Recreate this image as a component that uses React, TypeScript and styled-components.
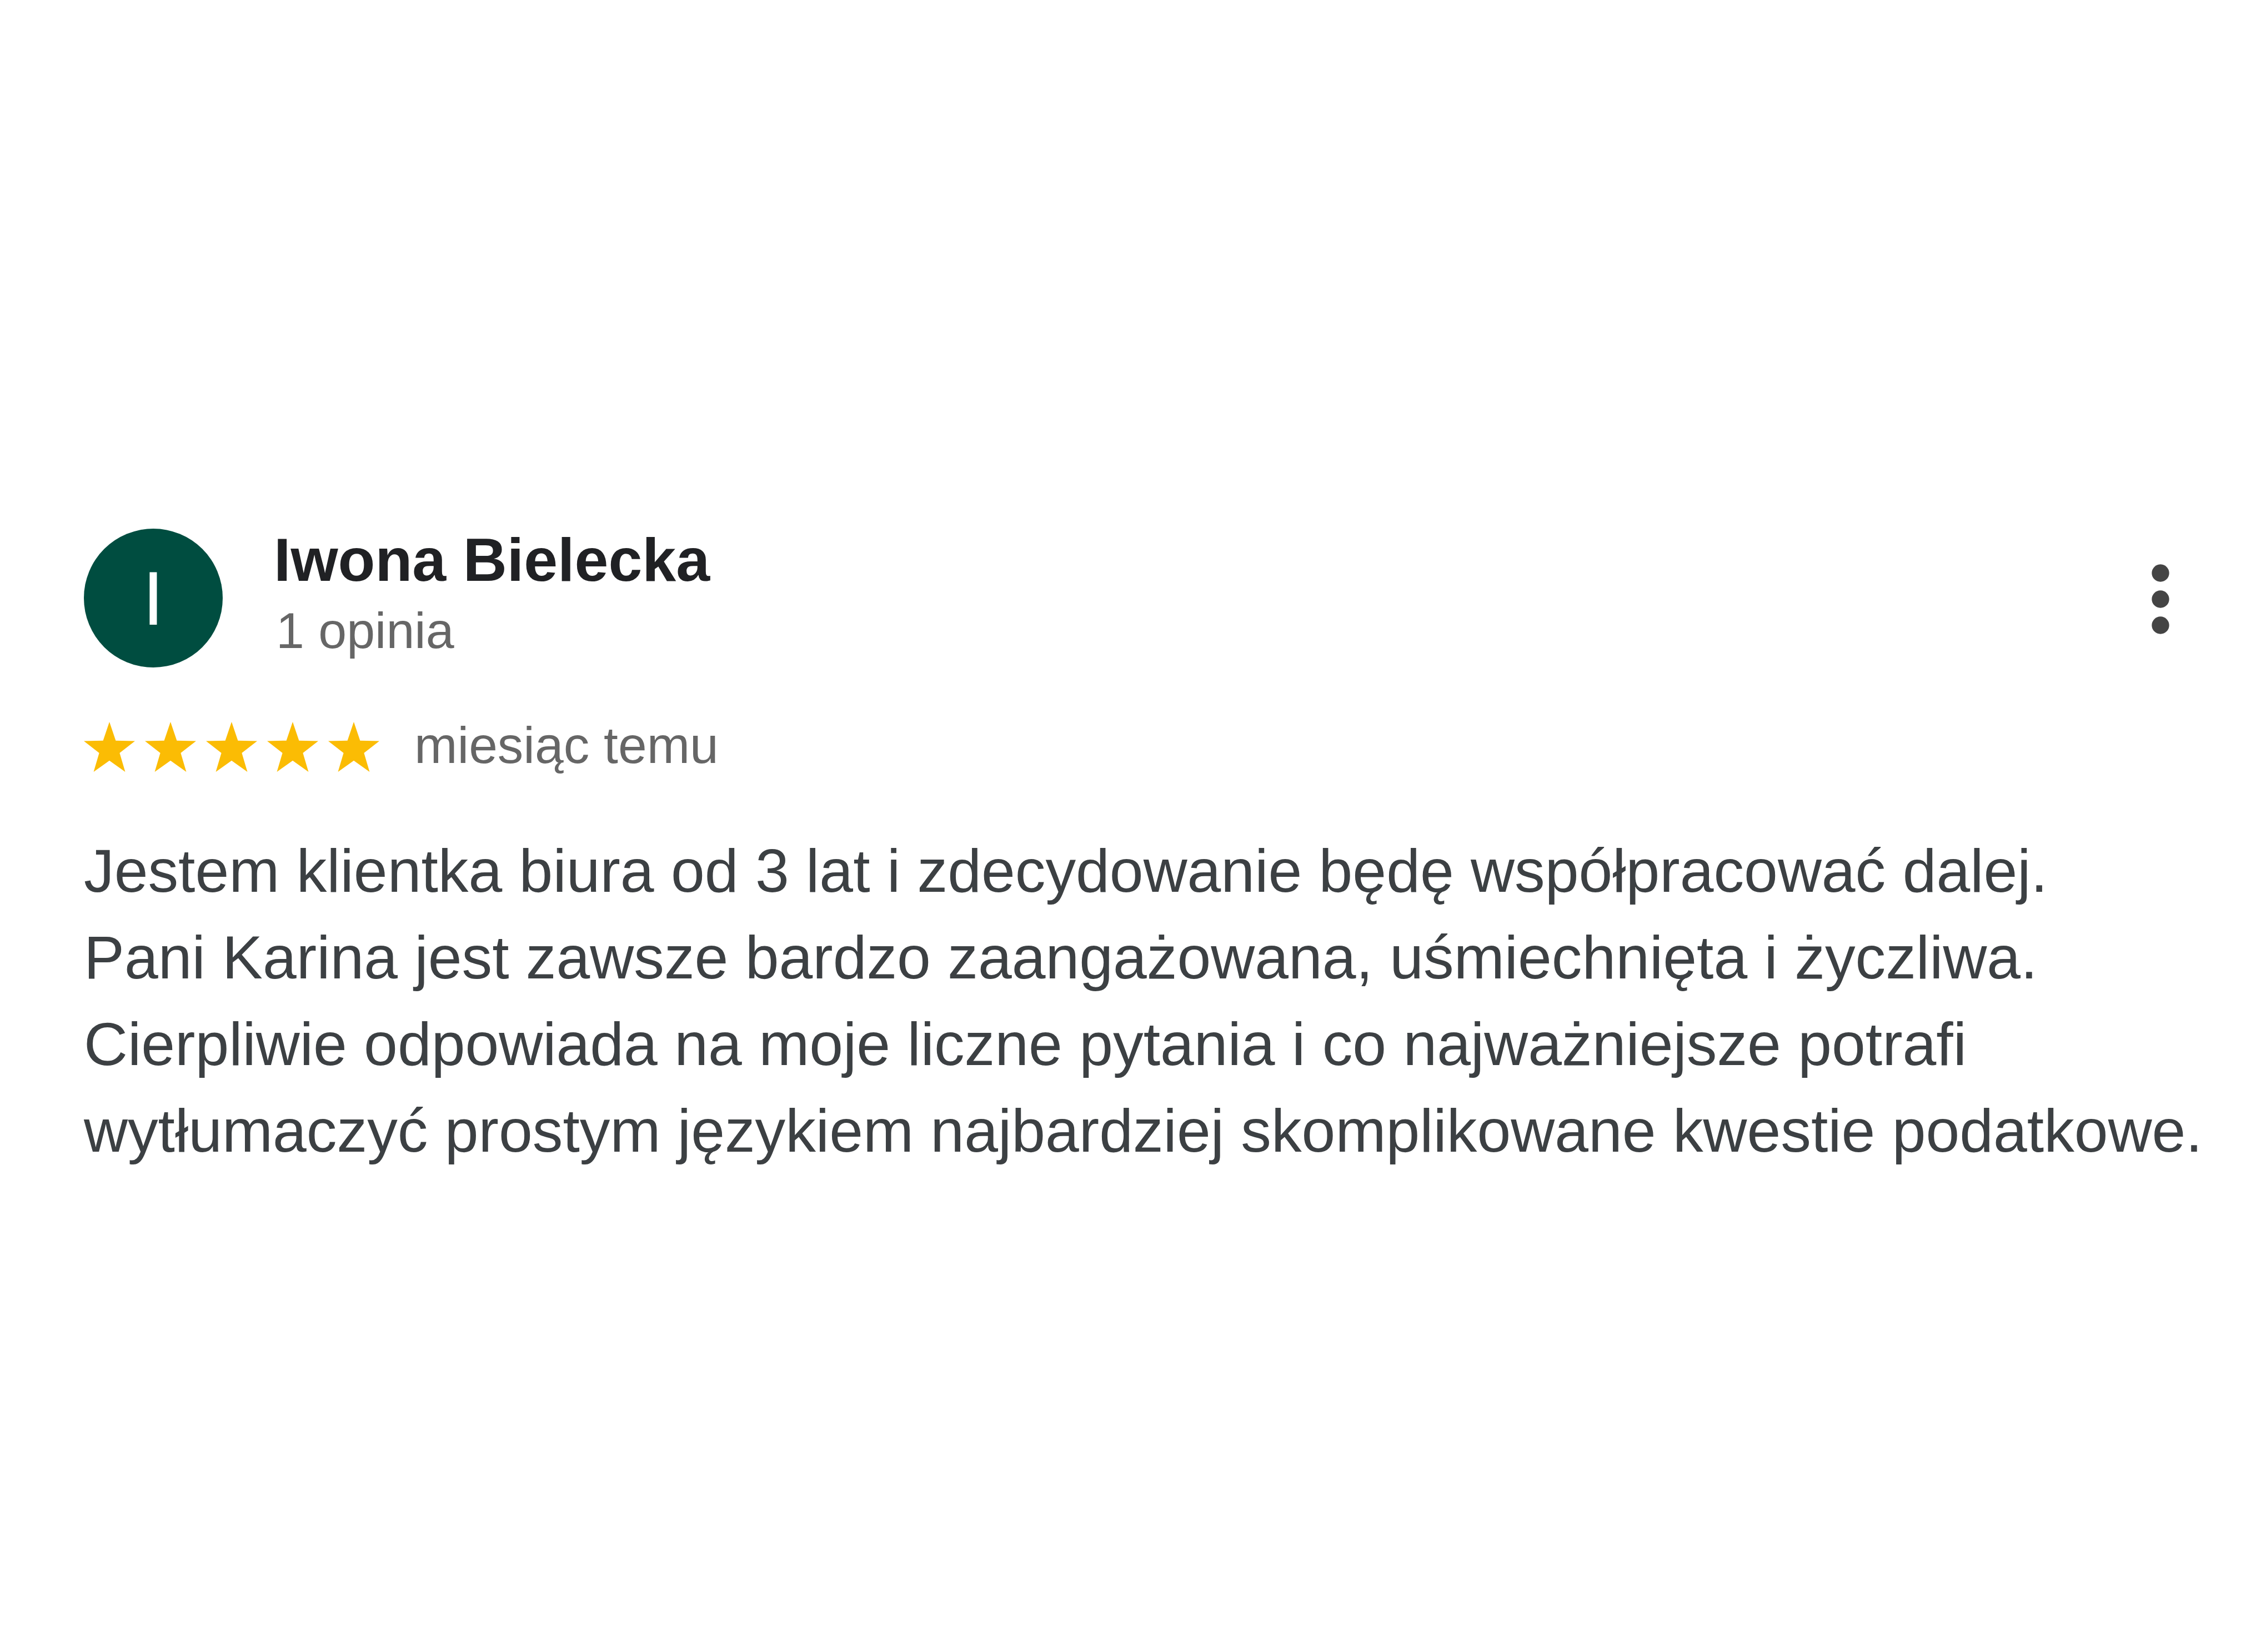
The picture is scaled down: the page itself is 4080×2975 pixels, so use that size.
import { createGlobalStyle } from "styled-components";
import styled from "styled-components";

const GlobalStyle = createGlobalStyle`
  html, body {
    margin: 0;
    padding: 0;
    background: #ffffff;
  }
  body {
    font-family: "Liberation Sans", Arial, sans-serif;
  }
`;

const Page = styled.div`
  min-height: 100vh;
  box-sizing: border-box;
  padding: 952px 96px 0 151px;
  background: #ffffff;
`;

const Header = styled.div`
  display: flex;
  align-items: flex-start;
  justify-content: space-between;
`;

const Author = styled.div`
  display: flex;
  align-items: flex-start;
  gap: 92px;
`;

const Avatar = styled.div`
  width: 250px;
  height: 250px;
  border-radius: 50%;
  background: #004d40;
  color: #ffffff;
  display: flex;
  align-items: center;
  justify-content: center;
  font-size: 138px;
  line-height: 1;
  flex-shrink: 0;
`;

const AuthorText = styled.div`
  display: flex;
  flex-direction: column;
  margin-top: -8px;
`;

const Name = styled.div`
  font-size: 109.5px;
  line-height: 128px;
  font-weight: 700;
  color: #202124;
`;

const Meta = styled.div`
  font-size: 91.5px;
  line-height: 126px;
  color: #666666;
  padding-left: 4px;
`;

const MenuButton = styled.div`
  width: 188px;
  height: 188px;
  margin-top: 33px;
  color: #444444;
  svg {
    display: block;
  }
`;

const RatingRow = styled.div`
  display: flex;
  align-items: center;
  margin-top: 98px;
  height: 90px;
`;

const Stars = styled.div`
  display: flex;
  gap: 18px;
  margin-right: 63px;
`;

const When = styled.span`
  font-size: 93px;
  line-height: 90px;
  color: #666666;
  position: relative;
  top: -3px;
`;

const Body = styled.p`
  margin: 100px 0 0;
  font-size: 109.3px;
  line-height: 156px;
  color: #3c4043;
  white-space: nowrap;
`;

const Star = () => (
  <svg width="92" height="90" viewBox="2.45 0 95.1 90.45" preserveAspectRatio="none">
    <polygon
      fill="#fbbc04"
      points="50,0 61.76,33.82 97.55,34.55 69.02,56.18 79.39,90.45 50,70 20.61,90.45 30.98,56.18 2.45,34.55 38.24,33.82"
    />
  </svg>
);

const MoreVert = () => (
  <svg width="188" height="188" viewBox="0 0 24 24" fill="currentColor">
    <circle cx="12" cy="6" r="2" />
    <circle cx="12" cy="12" r="2" />
    <circle cx="12" cy="18" r="2" />
  </svg>
);

export default function App() {
  return (
    <>
      <GlobalStyle />
      <Page>
        <Header>
          <Author>
            <Avatar>I</Avatar>
            <AuthorText>
              <Name>Iwona Bielecka</Name>
              <Meta>1 opinia</Meta>
            </AuthorText>
          </Author>
          <MenuButton>
            <MoreVert />
          </MenuButton>
        </Header>
        <RatingRow>
          <Stars>
            {[0, 1, 2, 3, 4].map((i) => (
              <Star key={`star-${i}`} />
            ))}
          </Stars>
          <When>miesiąc temu</When>
        </RatingRow>
        <Body>
          Jestem klientka biura od 3 lat i zdecydowanie będę współpracować dalej.
          <br />
          Pani Karina jest zawsze bardzo zaangażowana, uśmiechnięta i życzliwa.
          <br />
          Cierpliwie odpowiada na moje liczne pytania i co najważniejsze potrafi
          <br />
          wytłumaczyć prostym językiem najbardziej skomplikowane kwestie podatkowe.
        </Body>
      </Page>
    </>
  );
}
